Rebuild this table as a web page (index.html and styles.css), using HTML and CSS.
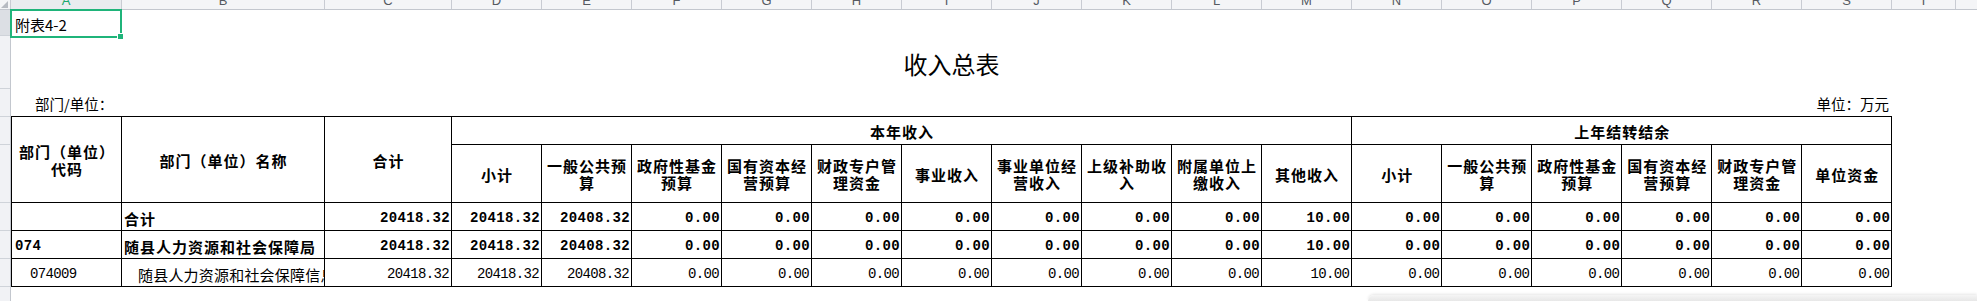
FILE: index.html
```html
<!DOCTYPE html>
<html lang="zh-CN">
<head>
<meta charset="utf-8">
<title>收入总表</title>
<link rel="stylesheet" href="styles.css">
</head>
<body>
<div class="sheet">
  <div class="colhead">
    <div class="corner"><span class="tri"></span></div>
    <div class="ch ch-a sel">A</div>
    <div class="ch ch-b">B</div>
    <div class="ch ch-c">C</div>
    <div class="ch ch-n">D</div>
    <div class="ch ch-n">E</div>
    <div class="ch ch-n">F</div>
    <div class="ch ch-n">G</div>
    <div class="ch ch-n">H</div>
    <div class="ch ch-n">I</div>
    <div class="ch ch-n">J</div>
    <div class="ch ch-n">K</div>
    <div class="ch ch-n">L</div>
    <div class="ch ch-n">M</div>
    <div class="ch ch-n">N</div>
    <div class="ch ch-n">O</div>
    <div class="ch ch-n">P</div>
    <div class="ch ch-n">Q</div>
    <div class="ch ch-n">R</div>
    <div class="ch ch-n">S</div>
    <div class="ch ch-t">T</div>
    <div class="ch ch-rest"></div>
  </div>
  <div class="main">
    <div class="gutter">
      <div class="g g1"></div>
      <div class="g g2"></div>
      <div class="g g3"></div>
      <div class="g g4"></div>
      <div class="g g5"></div>
      <div class="g g6"></div>
      <div class="g g6"></div>
      <div class="g g6"></div>
    </div>
    <div class="content">
      <div class="r1">
        <div class="a1">附表4-2<span class="selbox"></span><span class="handle"></span></div>
      </div>
      <div class="r2">收入总表</div>
      <div class="r3">
        <span>部门/单位：</span>
        <span>单位：万元</span>
      </div>
      <table class="grid">
        <colgroup>
          <col class="c-a"><col class="c-b"><col class="c-c">
          <col class="c-n"><col class="c-n"><col class="c-n"><col class="c-n"><col class="c-n">
          <col class="c-n"><col class="c-n"><col class="c-n"><col class="c-n"><col class="c-n">
          <col class="c-n"><col class="c-n"><col class="c-n"><col class="c-n"><col class="c-n"><col class="c-n">
        </colgroup>
        <tr class="h1">
          <th rowspan="2">部门（单位）代码</th>
          <th rowspan="2">部门（单位）名称</th>
          <th rowspan="2">合计</th>
          <th colspan="10">本年收入</th>
          <th colspan="6">上年结转结余</th>
        </tr>
        <tr class="h2">
          <th>小计</th>
          <th>一般公共预算</th>
          <th>政府性基金预算</th>
          <th>国有资本经营预算</th>
          <th>财政专户管理资金</th>
          <th>事业收入</th>
          <th>事业单位经营收入</th>
          <th>上级补助收入</th>
          <th>附属单位上缴收入</th>
          <th>其他收入</th>
          <th>小计</th>
          <th>一般公共预算</th>
          <th>政府性基金预算</th>
          <th>国有资本经营预算</th>
          <th>财政专户管理资金</th>
          <th>单位资金</th>
        </tr>
        <tr class="d strong">
          <td class="code"></td>
          <td class="name">合计</td>
          <td class="num">20418.32</td>
          <td class="num">20418.32</td>
          <td class="num">20408.32</td>
          <td class="num">0.00</td>
          <td class="num">0.00</td>
          <td class="num">0.00</td>
          <td class="num">0.00</td>
          <td class="num">0.00</td>
          <td class="num">0.00</td>
          <td class="num">0.00</td>
          <td class="num">10.00</td>
          <td class="num">0.00</td>
          <td class="num">0.00</td>
          <td class="num">0.00</td>
          <td class="num">0.00</td>
          <td class="num">0.00</td>
          <td class="num">0.00</td>
        </tr>
        <tr class="d strong">
          <td class="code">074</td>
          <td class="name">随县人力资源和社会保障局</td>
          <td class="num">20418.32</td>
          <td class="num">20418.32</td>
          <td class="num">20408.32</td>
          <td class="num">0.00</td>
          <td class="num">0.00</td>
          <td class="num">0.00</td>
          <td class="num">0.00</td>
          <td class="num">0.00</td>
          <td class="num">0.00</td>
          <td class="num">0.00</td>
          <td class="num">10.00</td>
          <td class="num">0.00</td>
          <td class="num">0.00</td>
          <td class="num">0.00</td>
          <td class="num">0.00</td>
          <td class="num">0.00</td>
          <td class="num">0.00</td>
        </tr>
        <tr class="d">
          <td class="code indent">074009</td>
          <td class="name indent">随县人力资源和社会保障信息中心</td>
          <td class="num">20418.32</td>
          <td class="num">20418.32</td>
          <td class="num">20408.32</td>
          <td class="num">0.00</td>
          <td class="num">0.00</td>
          <td class="num">0.00</td>
          <td class="num">0.00</td>
          <td class="num">0.00</td>
          <td class="num">0.00</td>
          <td class="num">0.00</td>
          <td class="num">10.00</td>
          <td class="num">0.00</td>
          <td class="num">0.00</td>
          <td class="num">0.00</td>
          <td class="num">0.00</td>
          <td class="num">0.00</td>
          <td class="num">0.00</td>
        </tr>
      </table>
    </div>
  </div>
  <div class="hbar"></div>
</div>
</body>
</html>
```

FILE: styles.css
```css
* { box-sizing: border-box; }

body {
  margin: 0;
  background: #ffffff;
  color: #000000;
  font-family: "Noto Sans CJK SC", "Noto Sans", sans-serif;
  overflow: hidden;
}

.sheet {
  position: relative;
  width: 1977px;
  height: 301px;
  overflow: hidden;
  background: #ffffff;
}

/* column header */
.colhead {
  display: flex;
  height: 10px;
  background: #f4f5f7;
  border-bottom: 1px solid #c3c7ce;
  overflow: hidden;
}

.corner {
  flex: none;
  width: 11px;
  border-right: 1px solid #c9ccd3;
  display: flex;
  justify-content: flex-end;
  align-items: flex-end;
  padding: 0 2px 1px 0;
}

.tri {
  width: 0;
  height: 0;
  border-left: 7px solid transparent;
  border-bottom: 7px solid #b7bbc2;
}

.ch {
  flex: none;
  height: 9px;
  border-right: 1px solid #c9ccd3;
  display: flex;
  justify-content: center;
  align-items: flex-end;
  padding-bottom: 2px;
  font-family: "Liberation Sans", Arial, sans-serif;
  font-size: 13px;
  line-height: 13px;
  color: #555a61;
  overflow: visible;
}

.ch.sel {
  color: #1aa86e;
  background: #e9ecef;
}

.ch-a { width: 111px; }
.ch-b { width: 203px; }
.ch-c { width: 127px; }
.ch-n { width: 90px; }
.ch-t { width: 64px; }
.ch-rest { flex: 1; border-right: none; }

/* body */
.main {
  display: flex;
}

.gutter {
  flex: none;
  width: 11px;
  height: 291px;
  background: #f1f2f5;
  border-right: 1px solid #c3c7ce;
  display: flex;
  flex-direction: column;
}

.g {
  flex: none;
  border-bottom: 1px solid #cfd3d9;
}

.g1 { height: 26px; background: #dcdfe4; }
.g2 { height: 53px; }
.g3 { height: 28px; }
.g4 { height: 28px; }
.g5 { height: 58px; }
.g6 { height: 28px; }

.content {
  flex: none;
  width: 1966px;
}

.r1 {
  height: 26px;
  display: flex;
  align-items: flex-end;
}

.a1 {
  position: relative;
  width: 110px;
  height: 26px;
  padding: 0 0 3px 4px;
  display: flex;
  align-items: flex-end;
  font-size: 15px;
  line-height: 17px;
}

.selbox {
  position: absolute;
  left: -1px;
  top: -1px;
  width: 112px;
  height: 29px;
  border: 2px solid #1fb47a;
}

.handle {
  position: absolute;
  left: 106px;
  top: 23px;
  width: 7px;
  height: 7px;
  background: #1fb47a;
  border: 1px solid #ffffff;
}

.r2 {
  width: 1881px;
  height: 52px;
  display: flex;
  justify-content: center;
  align-items: center;
  padding-top: 4px;
  font-size: 24px;
  line-height: 28px;
}

.r3 {
  width: 1881px;
  height: 28px;
  display: flex;
  justify-content: space-between;
  align-items: flex-end;
  padding: 0 3px 4px 24px;
  font-size: 14.5px;
  line-height: 17px;
}

/* table */
.grid {
  table-layout: fixed;
  border-collapse: collapse;
  width: 1881px;
}

.c-a { width: 110px; }
.c-b { width: 203px; }
.c-c { width: 127px; }
.c-n { width: 90px; }

.grid th,
.grid td {
  border: 1px solid #000000;
  padding: 0 2px;
  overflow: hidden;
  white-space: nowrap;
}

.grid th {
  font-weight: bold;
  font-size: 15px;
  line-height: 17px;
  letter-spacing: 1px;
  text-align: center;
  vertical-align: middle;
  white-space: normal;
  padding: 1px 3px 0 4px;
}

.h1 { height: 28px; }
.h2 { height: 58px; }
.d { height: 28px; }

.grid td {
  font-size: 15px;
  line-height: 17px;
  vertical-align: middle;
  padding-top: 3px;
  letter-spacing: 0.2px;
}

.strong td {
  font-weight: bold;
  letter-spacing: 1px;
}

.grid td.num {
  font-family: "Liberation Mono", "DejaVu Sans Mono", monospace;
  font-size: 14px;
  text-align: right;
  padding-right: 2px;
  letter-spacing: -0.65px;
}

.strong td.num {
  letter-spacing: 0.35px;
  padding-right: 1px;
}

.grid td.code {
  font-family: "Liberation Mono", "DejaVu Sans Mono", monospace;
  font-size: 14px;
  letter-spacing: -0.65px;
  padding-left: 3px;
}

.strong td.code {
  letter-spacing: 0.35px;
}

.grid td.name {
  padding-left: 2px;
}

.grid td.indent {
  padding-left: 18px;
}

.grid td.name.indent {
  padding-left: 16px;
}

/* horizontal scroll shade at bottom right */
.hbar {
  position: absolute;
  left: 1368px;
  right: 0;
  top: 295px;
  bottom: 0;
  background: linear-gradient(#f5f5f5, #e7e7e7);
  border-top-left-radius: 6px;
  box-shadow: 0 -1px 3px rgba(0, 0, 0, 0.10);
}
```
